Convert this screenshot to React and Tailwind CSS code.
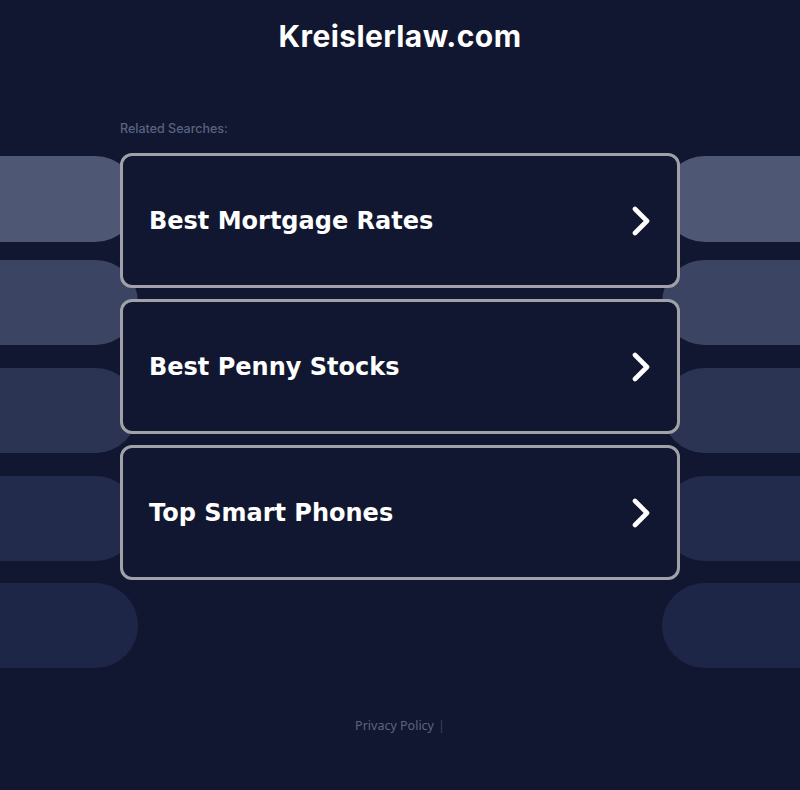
import React from 'react'

const searches = ['Best Mortgage Rates', 'Best Penny Stocks', 'Top Smart Phones']

const pills = [
  { cls: 'h-[86px] bg-[#4e5875]' },
  { cls: 'h-[85px] mt-[18px] bg-[#3b4462]' },
  { cls: 'h-[85px] mt-[23px] bg-[#2b3453]' },
  { cls: 'h-[85px] mt-[23px] bg-[#222b4b]' },
  { cls: 'h-[85px] mt-[22px] bg-[#1d2646]' },
]

function Chevron() {
  return (
    <svg width="24" height="30" viewBox="0 0 24 30" fill="none">
      <polyline
        points="5,3 17,15 5,27"
        stroke="white"
        strokeWidth="4.6"
        strokeLinecap="round"
        strokeLinejoin="round"
      />
    </svg>
  )
}

function PillColumn({ side }) {
  return (
    <div className="w-[138px] shrink-0 pt-[36px] flex flex-col">
      {pills.map((p, i) => (
        <div
          key={i}
          className={`${p.cls} w-full ${side === 'left' ? 'rounded-r-[43px]' : 'rounded-l-[43px]'}`}
        />
      ))}
    </div>
  )
}

export default function App() {
  return (
    <div className="w-[800px] h-[790px] bg-[#111730] flex flex-col overflow-hidden">
      <div className="h-[72px] flex items-center justify-center">
        <h1 className="text-[30px] font-bold text-white tracking-[0.4px]" style={{ fontFamily: 'Inter, "Noto Sans", sans-serif' }}>
          Kreislerlaw.com
        </h1>
      </div>
      <div className="mt-[48px] flex">
        <PillColumn side="left" />
        <div className="w-[560px] shrink-0 -mx-[18px] relative z-10">
          <div className="h-[33px] pt-[1px] text-[12.5px] text-[#5a6280] font-medium leading-[16px]" style={{ fontFamily: 'Inter, sans-serif' }}>
            Related Searches:
          </div>
          <div className="flex flex-col gap-[11px]">
            {searches.map(s => (
              <div
                key={s}
                className="h-[135px] border-[3px] border-[#a1a2a7] rounded-[12px] bg-[#111730] flex items-center justify-between pl-[26px] pr-[23px]"
              >
                <span className="text-[24px] font-bold text-white" style={{ fontFamily: '"DejaVu Sans", sans-serif' }}>
                  {s}
                </span>
                <Chevron />
              </div>
            ))}
          </div>
        </div>
        <PillColumn side="right" />
      </div>
      <div className="mt-[50px] flex justify-center text-[12.5px] leading-[16px]" style={{ fontFamily: '"Noto Sans", sans-serif' }}>
        <span className="text-[#5d6482]">Privacy Policy</span>
        <span className="text-[#3a4060] ml-[4px]">|</span>
      </div>
    </div>
  )
}
